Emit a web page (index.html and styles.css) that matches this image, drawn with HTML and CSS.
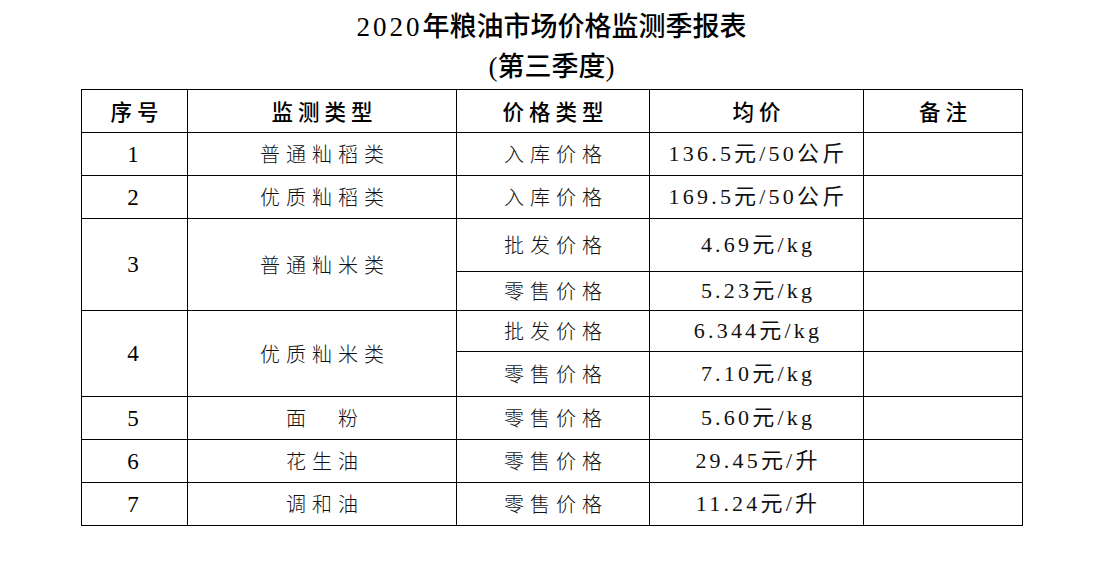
FILE: index.html
```html
<!DOCTYPE html>
<html lang="zh-CN">
<head>
<meta charset="utf-8">
<title>2020年粮油市场价格监测季报表</title>
<link rel="stylesheet" href="styles.css">
</head>
<body>
<div class="page">
  <h1 class="title">
    <span class="line"><span class="num">2020</span>年粮油市场价格监测季报表</span>
    <span class="line"><span class="paren">(</span>第三季度<span class="paren">)</span></span>
  </h1>
  <table class="report">
    <colgroup>
      <col class="c-no">
      <col class="c-cat">
      <col class="c-type">
      <col class="c-price">
      <col class="c-note">
    </colgroup>
    <thead>
      <tr class="h43">
        <th>序号</th>
        <th>监测类型</th>
        <th>价格类型</th>
        <th>均价</th>
        <th>备注</th>
      </tr>
    </thead>
    <tbody>
      <tr class="h43">
        <td class="no">1</td>
        <td class="zh">普通籼稻类</td>
        <td class="zh">入库价格</td>
        <td class="price">136.5元/50公斤</td>
        <td></td>
      </tr>
      <tr class="h43">
        <td class="no">2</td>
        <td class="zh">优质籼稻类</td>
        <td class="zh">入库价格</td>
        <td class="price">169.5元/50公斤</td>
        <td></td>
      </tr>
      <tr class="h53">
        <td class="no" rowspan="2">3</td>
        <td class="zh" rowspan="2">普通籼米类</td>
        <td class="zh">批发价格</td>
        <td class="price">4.69元/kg</td>
        <td></td>
      </tr>
      <tr class="h39">
        <td class="zh">零售价格</td>
        <td class="price">5.23元/kg</td>
        <td></td>
      </tr>
      <tr class="h41">
        <td class="no" rowspan="2">4</td>
        <td class="zh" rowspan="2">优质籼米类</td>
        <td class="zh">批发价格</td>
        <td class="price">6.344元/kg</td>
        <td></td>
      </tr>
      <tr class="h45">
        <td class="zh">零售价格</td>
        <td class="price">7.10元/kg</td>
        <td></td>
      </tr>
      <tr class="h43">
        <td class="no">5</td>
        <td class="zh">面　粉</td>
        <td class="zh">零售价格</td>
        <td class="price">5.60元/kg</td>
        <td></td>
      </tr>
      <tr class="h43">
        <td class="no">6</td>
        <td class="zh">花生油</td>
        <td class="zh">零售价格</td>
        <td class="price">29.45元/升</td>
        <td></td>
      </tr>
      <tr class="h43">
        <td class="no">7</td>
        <td class="zh">调和油</td>
        <td class="zh">零售价格</td>
        <td class="price">11.24元/升</td>
        <td></td>
      </tr>
    </tbody>
  </table>
</div>
</body>
</html>
```

FILE: styles.css
```css
html, body {
  margin: 0;
  padding: 0;
  background: #ffffff;
}

body {
  font-family: "Liberation Serif", "Noto Sans CJK SC", serif;
  color: #000;
}

.page {
  width: 941px;
  padding: 7px 0 0 81px;
}

.title {
  margin: 0 0 2px 0;
  font-size: 27px;
  line-height: 40px;
  font-weight: 500;
  text-align: center;
  font-family: "Liberation Serif", "Noto Sans CJK SC", serif;
  color: #000;
}

.title .line {
  display: block;
  height: 40px;
}

.title .num {
  font-weight: normal;
  font-size: 27px;
  letter-spacing: 3px;
  line-height: 1;
}

.title .paren {
  font-weight: normal;
  font-size: 27px;
  line-height: 1;
}

.report {
  width: 941px;
  border-collapse: collapse;
  table-layout: fixed;
}

.c-no { width: 106px; }
.c-cat { width: 269px; }
.c-type { width: 193px; }
.c-price { width: 214px; }
.c-note { width: 159px; }

.report th,
.report td {
  border: 1.5px solid #000;
  padding: 0;
  text-align: center;
  vertical-align: middle;
}

.report th {
  font-family: "Noto Sans CJK SC", sans-serif;
  font-weight: 500;
  font-size: 21.5px;
  letter-spacing: 5px;
  text-indent: 5px;
  line-height: 1;
}

.h43 { height: 43px; }
.h53 { height: 53px; }
.h39 { height: 39px; }
.h41 { height: 41px; }
.h45 { height: 45px; }

.report td.no {
  font-family: "Liberation Serif", serif;
  font-size: 23px;
  line-height: 1;
  padding-right: 3px;
}

.report td.zh {
  font-family: "Noto Sans CJK SC", sans-serif;
  font-weight: 300;
  font-size: 20px;
  letter-spacing: 6px;
  text-indent: 6px;
  line-height: 1;
  color: #111;
}

.report td.price {
  font-family: "Liberation Serif", "Noto Sans CJK SC", serif;
  font-size: 22px;
  letter-spacing: 3.2px;
  text-indent: 3px;
  line-height: 1;
  color: #111;
}
```
